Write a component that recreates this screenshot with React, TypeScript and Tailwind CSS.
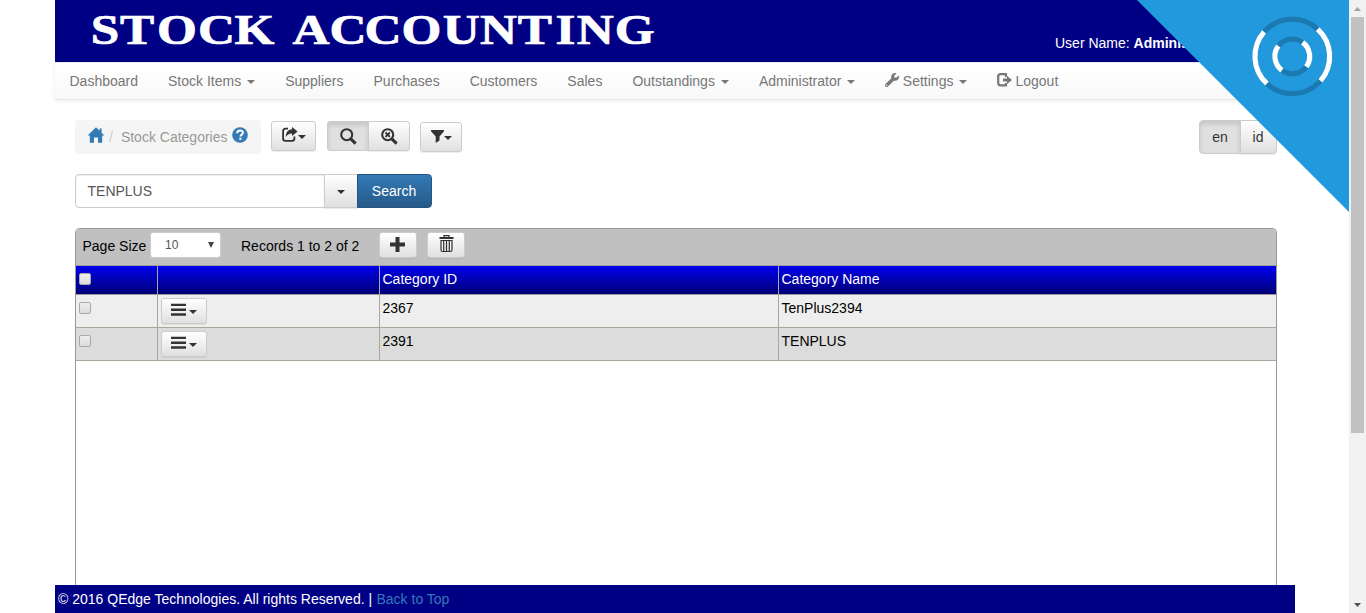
import React from "react";
import { FaWrench } from "react-icons/fa";

const btn =
  "border border-[#ccc] bg-linear-to-b from-white to-[#e0e0e0] text-[#333] shadow-[inset_0_1px_0_rgba(255,255,255,.15),0_1px_1px_rgba(0,0,0,.075)] flex items-center justify-center";
const pressed =
  "border border-[#ccc] bg-[#e0e0e0] text-[#333] shadow-[inset_0_3px_5px_rgba(0,0,0,.125)] flex items-center justify-center";

function Caret({ className = "" }: { className?: string }) {
  return (
    <svg width="8" height="4" viewBox="0 0 8 4" className={`shrink-0 ${className}`} fill="currentColor">
      <path d="M0 0h8L4 4z" />
    </svg>
  );
}

function HomeIcon() {
  return (
    <svg width="18" height="17" viewBox="0 0 18 17" fill="#337ab7" className="shrink-0">
      <path d="M9 0.300L0.600 8.600h2.200v7.200h4.200v-5.200h4v5.200h4.200V8.600h2.200L14.600 5.700V1.400h-2v2.400z" />
    </svg>
  );
}

function HelpIcon() {
  return (
    <svg width="16" height="16" viewBox="0 0 16 16" className="shrink-0">
      <circle cx="8" cy="8" r="7.800" fill="#337ab7" />
      <path d="M5.200 6.200C5.200 4.200 6.500 3.500 8.100 3.500c1.700 0 2.800.900 2.800 2.300C10.900 7.600 8.500 7.700 8.500 9.600" fill="none" stroke="#fff" strokeWidth="2" />
      <path d="M7.300 10.800h2.200v2H7.300z" fill="#fff" />
    </svg>
  );
}

function ShareIcon() {
  return (
    <svg width="16" height="15" viewBox="0 0 16 15" className="shrink-0">
      <path d="M6 1.700H3.500Q1.100 1.700 1.100 4.200v7.300q0 2.300 2.300 2.300h6.700q2.300 0 2.300-2.300V9.500" fill="none" stroke="#333" strokeWidth="1.800" />
      <path d="M10 0l5.600 4.500L10 9V6.400C7.500 6.400 5.600 7 3.800 10 3.900 5.400 6 2.500 10 2.300z" fill="#333" />
    </svg>
  );
}

function SearchIcon({ cross = false }: { cross?: boolean }) {
  return (
    <svg width="17" height="17" viewBox="0 0 17 17" fill="none" stroke="#333" className="shrink-0">
      <circle cx="6.700" cy="6.700" r="5.500" strokeWidth="2.100" />
      <path d="M10.600 10.600l5 5" strokeWidth="3" />
      {cross && <path d="M4.500 4.500l4.400 4.400M8.900 4.500L4.500 8.900" strokeWidth="1.900" />}
    </svg>
  );
}

function MenuButton() {
  return (
    <div className={`${btn} h-[26px] w-[46px] gap-[3px] rounded-[3px]`}>
      <svg width="15" height="13" viewBox="0 0 15 13" fill="#333" className="-mt-[3px]">
        <path d="M0 .700h15v2.400H0zM0 5.500h15v2.400H0zM0 10.300h15v2.400H0z" />
      </svg>
      <Caret className="mt-px" />
    </div>
  );
}

function Check() {
  return (
    <span className="mt-[7px] ml-[3px] block size-3 rounded-[2px] border border-[#a9a9a9] bg-linear-to-b from-[#eee] to-[#dcdcdc]" />
  );
}

function NavItem({ label, caret, icon }: { label: string; caret?: boolean; icon?: React.ReactNode }) {
  return (
    <div className="flex items-center px-[15px]">
      {icon}
      <span>{label}</span>
      {caret && <Caret className="mt-[2px] ml-[6px]" />}
    </div>
  );
}

const rows = [
  { id: "2367", name: "TenPlus2394", bg: "bg-[#eee]" },
  { id: "2391", name: "TENPLUS", bg: "bg-[#dcdcdc]" },
];
const grid = "grid grid-cols-[82px_222px_399px_1fr]";

export default function App() {
  return (
    <div className="relative flex h-[613px] w-[1366px] overflow-hidden bg-white font-['Liberation_Sans',Arial,sans-serif] text-[14px] leading-5 text-black">
      <div className="ml-[55px] flex w-[1240px] flex-col">
        <header className="flex h-[62px] shrink-0 justify-between bg-[#000084] text-white">
          <svg width="620" height="62" viewBox="0 0 620 62" fill="#fff" stroke="#fff" strokeWidth=".7" fontFamily="Liberation Serif, serif" fontWeight="700" fontSize="42">
            <text
              y="43.700"
              x="29.400 53.300 83.600 117.200 147.100 180 194.700 225 253.700 284 317.800 348.300 379.400 410.200 427.700 458.900"
              transform="scale(1.220 1)"
            >
              STOCK ACCOUNTING
            </text>
          </svg>
          <div className="mt-[33px] w-[240px] whitespace-nowrap">
            User Name: <b>Administrator</b>
          </div>
        </header>
        <nav className="flex h-[38px] shrink-0 border-y border-[#e7e7e7] bg-linear-to-b from-white to-[#f8f8f8] text-[#777] shadow-[0_1px_5px_rgba(0,0,0,.075)]">
          <div className="-ml-[0.500px] flex">
            <NavItem label="Dashboard" />
            <NavItem label="Stock Items" caret />
            <NavItem label="Suppliers" />
            <NavItem label="Purchases" />
            <NavItem label="Customers" />
            <NavItem label="Sales" />
            <NavItem label="Outstandings" caret />
            <NavItem label="Administrator" caret />
            <NavItem label="Settings" caret icon={<FaWrench size={14} className="-ml-[0.500px] mr-[4px] -mt-[2px]" />} />
            <NavItem
              label="Logout"
              icon={
                <svg width="15" height="14" viewBox="0 0 15 14" className="mr-[3px] -mt-[2px]">
                  <path d="M9 1.200H3.500Q1.200 1.200 1.200 3.500v6.500q0 2.300 2.300 2.300H9V10M9 .200V4" fill="none" stroke="currentColor" strokeWidth="2.200" />
                  <path d="M6 5.400h4V2.900l5 4.100-5 4.100V8.600H6z" fill="currentColor" />
                </svg>
              }
            />
          </div>
        </nav>

        <main className="mr-[18px] ml-[20px] flex min-h-0 flex-1 flex-col pt-[20px]">
          <div className="flex h-[34px] shrink-0 items-start">
            <div className="flex h-[34px] w-[186px] items-center rounded-[4px] bg-[#f5f5f5] pl-[12px] text-[#999]">
              <div className="-mt-[3px]"><HomeIcon /></div>
              <span className="ml-[4px] text-[#ccc]">/</span>
              <span className="ml-[8px] whitespace-nowrap">Stock Categories</span>
              <div className="-mt-[4px] ml-[4px]"><HelpIcon /></div>
            </div>
            <div className={`${btn} mt-px ml-[10px] h-[30px] w-[45px] gap-px rounded-[3px]`}>
              <div className="-mt-[4px]"><ShareIcon /></div>
              <Caret className="mt-px -ml-px" />
            </div>
            <div className="mt-px ml-[11px] flex h-[30px]">
              <div className={`${pressed} w-[42px] rounded-l-[3px]`}><SearchIcon /></div>
              <div className={`${btn} -ml-px w-[42px] rounded-r-[3px]`}><SearchIcon cross /></div>
            </div>
            <div className={`${btn} mt-[2px] ml-[10px] h-[30px] w-[42px] rounded-[3px]`}>
              <svg width="13" height="13" viewBox="0 0 13 13" fill="#333" className="-mt-px">
                <path d="M0 0h13v1.300L8.500 6.500V10.500L4.700 13V6.500L0 1.300z" />
              </svg>
              <Caret className="mt-px" />
            </div>
            <div className="ml-auto flex h-[34px]">
              <div className={`${pressed} w-[42px] rounded-l-[4px]`}>en</div>
              <div className={`${btn} -ml-px w-[37px] rounded-r-[4px] pr-px`}>id</div>
            </div>
          </div>

          <div className="mt-[20px] flex h-[34px] shrink-0">
            <div className="flex w-[250px] items-center rounded-l-[4px] border border-[#ccc] pl-[11.500px] text-[#555] shadow-[inset_0_1px_1px_rgba(0,0,0,.075)]">TENPLUS</div>
            <div className={`${btn} -ml-px w-[34px]`}><Caret className="mt-px" /></div>
            <div className="-ml-px flex w-[75px] items-center justify-center rounded-r-[4px] border border-[#245580] bg-linear-to-b from-[#337ab7] to-[#265a88] pr-px text-white">Search</div>
          </div>

          <section className="mt-[20px] flex w-[1202px] flex-1 flex-col overflow-hidden rounded-t-[5px] border border-b-0 border-[#999]">
            <div className="flex h-[37px] shrink-0 items-center border-b border-[#999] bg-[#c0c0c0] pl-[6.500px] whitespace-nowrap">
              <span className="mt-[-2px] w-[67.500px]">Page Size</span>
              <div className="-mt-[4px] flex h-[26px] w-[71px] items-center justify-between rounded-[3px] border border-[#ccc] bg-white pr-[6px] pl-[14px] text-[12px] text-[#555]">
                <span>10</span>
                <svg width="6" height="6" viewBox="0 0 6 6" fill="#444"><path d="M0 0h6L3 6z" /></svg>
              </div>
              <span className="mt-[-2px] ml-[20px] w-[138px]">Records 1 to 2 of 2</span>
              <div className={`${btn} -mt-[4px] h-[26px] w-[38px] rounded-[3px]`}>
                <svg width="15" height="15" viewBox="0 0 15 15" fill="#333" className="-mt-px -ml-px"><path d="M5.500 0h4v5.500H15v4H9.500V15h-4V9.500H0v-4h5.500z" /></svg>
              </div>
              <div className={`${btn} -mt-[4px] ml-[10px] h-[26px] w-[38px] rounded-[3px]`}>
                <svg width="15" height="18" viewBox="0 0 15 18" fill="none" stroke="#333" className="-mt-[2px] ml-px">
                  <path d="M5 2V.700h5V2" strokeWidth="1.200" />
                  <path d="M.500 3h14" strokeWidth="2" />
                  <path d="M2 5.500v9.500q0 1.500 1.500 1.500h8q1.500 0 1.500-1.500V5.500z" strokeWidth="1.200" />
                  <path d="M4.700 6v10M7.500 6v10M10.300 6v10" strokeWidth="1.200" />
                </svg>
              </div>
            </div>
            <div className={`${grid} h-[29px] shrink-0 border-b border-[#999] bg-linear-to-b from-[#0000ee] to-[#000078] leading-[27px] text-white`}>
              <div className="border-r border-[#aaa]"><Check /></div>
              <div className="border-r border-[#aaa]" />
              <div className="border-r border-[#aaa] pl-[2.500px]">Category ID</div>
              <div className="pl-[2.500px]">Category Name</div>
            </div>
            {rows.map((r) => (
              <div key={r.id} className={`${grid} h-[33px] shrink-0 border-b border-[#a9a99b] leading-[27px] ${r.bg}`}>
                <div className="border-r border-[#a9a99b]"><Check /></div>
                <div className="border-r border-[#a9a99b] pt-[3px] pl-[3px]"><MenuButton /></div>
                <div className="border-r border-[#a9a99b] pl-[2.500px]">{r.id}</div>
                <div className="pl-[2.500px]">{r.name}</div>
              </div>
            ))}
          </section>
        </main>

        <footer className="h-7 shrink-0 bg-[#000084] pl-[3px] leading-7 text-white">
          © 2016 QEdge Technologies. All rights Reserved. | <span className="ml-[0.500px] text-[#337ab7]">Back to Top</span>
        </footer>
      </div>

      <div className="ml-auto flex w-[17px] flex-col items-center bg-[#f1f1f1]">
        <div className="flex h-[17px] items-center"><svg width="7" height="4" viewBox="0 0 7 4" fill="#a3a3a3"><path d="M0 4h7L3.500 0z" /></svg></div>
        <div className="h-[416px] w-[13px] bg-[#c1c1c1]" />
        <div className="mt-auto flex h-[17px] items-center"><svg width="7" height="4" viewBox="0 0 7 4" fill="#505050"><path d="M0 0h7L3.500 4z" /></svg></div>
      </div>

      <svg className="absolute top-0 right-[17px]" width="212" height="212" viewBox="0 0 212 212" fill="none">
        <path d="M0 0h212v212z" fill="#2299dd" />
        <g strokeWidth="5.200" transform="translate(155.300 56.400)">
          <circle r="37.300" stroke="#1b7ab1" />
          <circle r="17.400" stroke="#1b7ab1" />
          <g stroke="#fff">
            <path d="M25.400-27.300A37.300 37.300 0 0 1 28.200 24.500" />
            <path d="M-25.400 27.300A37.300 37.300 0 0 1-28.200-24.500" />
            <path d="M10.350-14A17.400 17.400 0 0 1 14 10.350" />
            <path d="M-10.350 14A17.400 17.400 0 0 1-14-10.350" />
          </g>
        </g>
      </svg>
    </div>
  );
}
